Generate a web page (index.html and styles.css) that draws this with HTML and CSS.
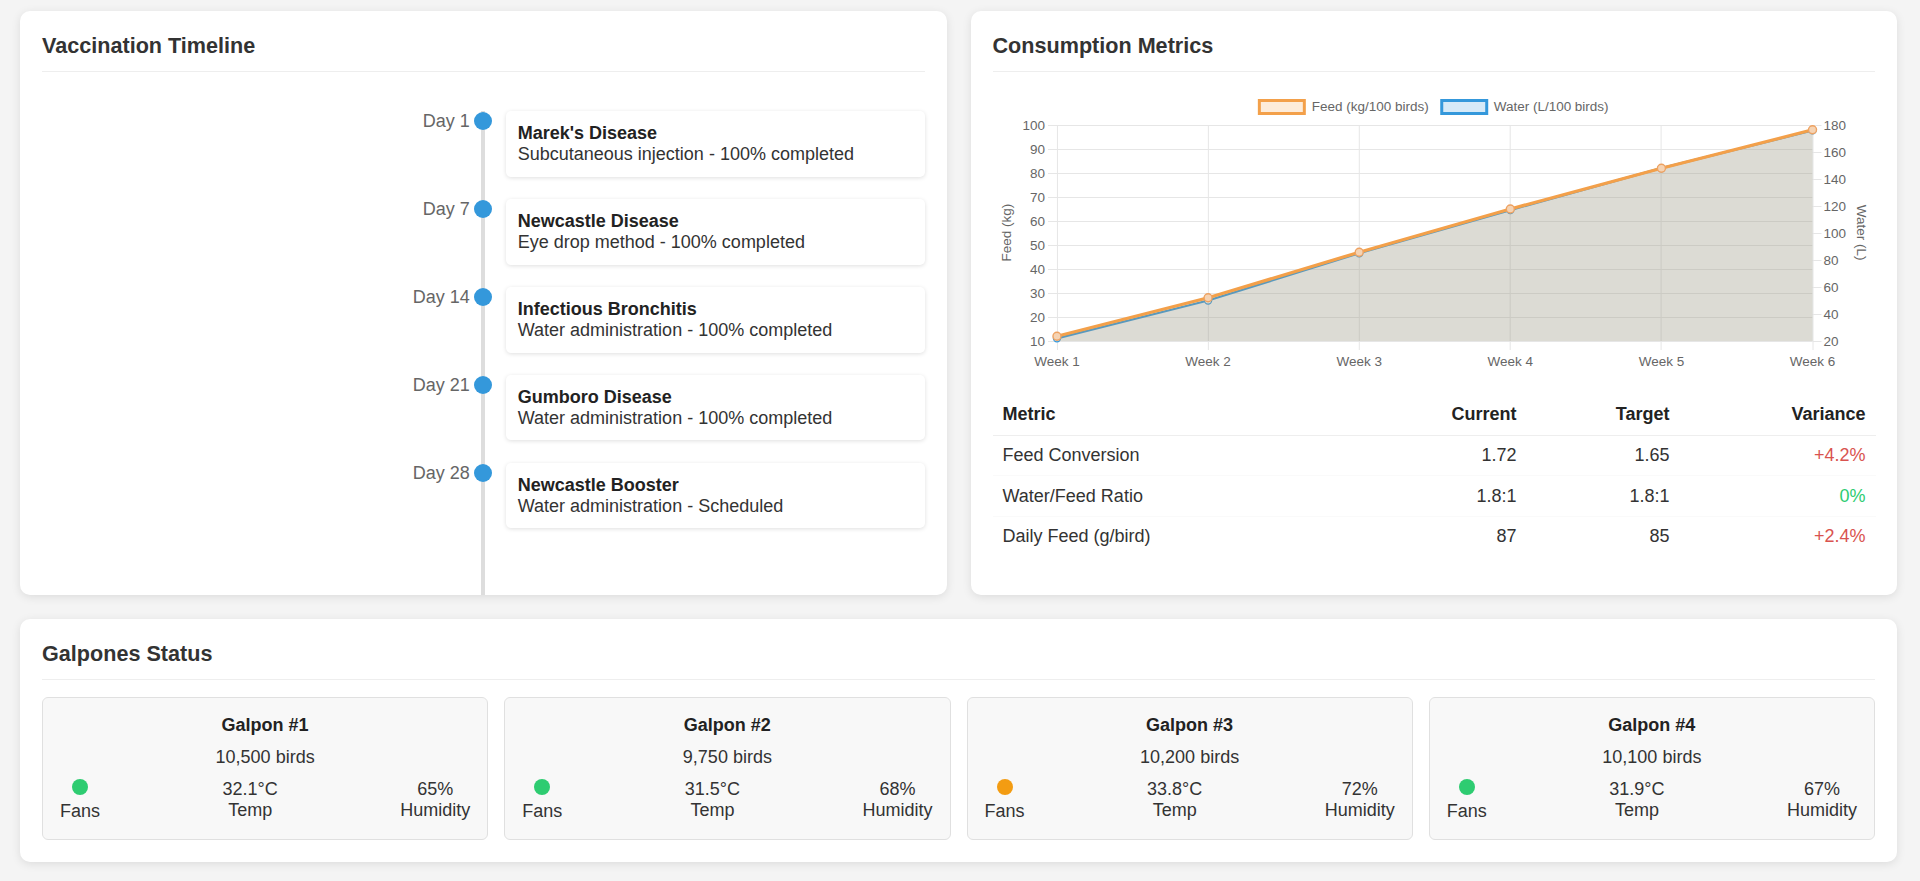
FILE: index.html
```html
<!DOCTYPE html>
<html lang="en">
<head>
<meta charset="utf-8">
<title>Farm Dashboard</title>
<link rel="stylesheet" href="styles.css">
</head>
<body>
<div class="dashboard">
  <div class="top-row">
    <section class="card">
      <div class="card-header"><h2>Vaccination Timeline</h2></div>
      <div class="timeline">
        <div class="tl-item">
          <div class="tl-day">Day 1</div>
          <span class="tl-dot"></span>
          <div class="tl-content">
            <div class="tl-card">
              <div class="tl-title">Marek's Disease</div>
              <div class="tl-desc">Subcutaneous injection - 100% completed</div>
            </div>
          </div>
        </div>
        <div class="tl-item">
          <div class="tl-day">Day 7</div>
          <span class="tl-dot"></span>
          <div class="tl-content">
            <div class="tl-card">
              <div class="tl-title">Newcastle Disease</div>
              <div class="tl-desc">Eye drop method - 100% completed</div>
            </div>
          </div>
        </div>
        <div class="tl-item">
          <div class="tl-day">Day 14</div>
          <span class="tl-dot"></span>
          <div class="tl-content">
            <div class="tl-card">
              <div class="tl-title">Infectious Bronchitis</div>
              <div class="tl-desc">Water administration - 100% completed</div>
            </div>
          </div>
        </div>
        <div class="tl-item">
          <div class="tl-day">Day 21</div>
          <span class="tl-dot"></span>
          <div class="tl-content">
            <div class="tl-card">
              <div class="tl-title">Gumboro Disease</div>
              <div class="tl-desc">Water administration - 100% completed</div>
            </div>
          </div>
        </div>
        <div class="tl-item">
          <div class="tl-day">Day 28</div>
          <span class="tl-dot"></span>
          <div class="tl-content">
            <div class="tl-card">
              <div class="tl-title">Newcastle Booster</div>
              <div class="tl-desc">Water administration - Scheduled</div>
            </div>
          </div>
        </div>
      </div>
    </section>

    <section class="card">
      <div class="card-header"><h2>Consumption Metrics</h2></div>
      <svg class="chart" viewBox="0 0 883 306" preserveAspectRatio="none">
        <g transform="translate(0,3)">
          <!-- legend -->
          <rect x="266.5" y="8.5" width="45" height="13" fill="rgba(245,160,72,0.2)" stroke="#f3a04a" stroke-width="3"/>
          <text class="lbl" x="319" y="19">Feed (kg/100 birds)</text>
          <rect x="449" y="8.5" width="45" height="13" fill="rgba(52,152,219,0.2)" stroke="#3498db" stroke-width="3"/>
          <text class="lbl" x="501" y="19">Water (L/100 birds)</text>

          <!-- horizontal grid (left axis) -->
          <g stroke="#e6e6e6" stroke-width="1">
            <line x1="55" y1="33.5" x2="820" y2="33.5"/>
            <line x1="55" y1="57.5" x2="820" y2="57.5"/>
            <line x1="55" y1="81.5" x2="820" y2="81.5"/>
            <line x1="55" y1="105.5" x2="820" y2="105.5"/>
            <line x1="55" y1="129.5" x2="820" y2="129.5"/>
            <line x1="55" y1="153.5" x2="820" y2="153.5"/>
            <line x1="55" y1="177.5" x2="820" y2="177.5"/>
            <line x1="55" y1="201.5" x2="820" y2="201.5"/>
            <line x1="55" y1="225.5" x2="820" y2="225.5"/>
            <line x1="55" y1="249.5" x2="820" y2="249.5"/>
            <!-- vertical grid -->
            <line x1="64.5" y1="33" x2="64.5" y2="258"/>
            <line x1="215.5" y1="33" x2="215.5" y2="258"/>
            <line x1="366.5" y1="33" x2="366.5" y2="258"/>
            <line x1="517.5" y1="33" x2="517.5" y2="258"/>
            <line x1="668.5" y1="33" x2="668.5" y2="258"/>
            <line x1="820.5" y1="33" x2="820.5" y2="258"/>
            <!-- right axis ticks -->
            <line x1="820" y1="33.5" x2="829" y2="33.5"/>
            <line x1="820" y1="60.5" x2="829" y2="60.5"/>
            <line x1="820" y1="87.5" x2="829" y2="87.5"/>
            <line x1="820" y1="114.5" x2="829" y2="114.5"/>
            <line x1="820" y1="141.5" x2="829" y2="141.5"/>
            <line x1="820" y1="168.5" x2="829" y2="168.5"/>
            <line x1="820" y1="195.5" x2="829" y2="195.5"/>
            <line x1="820" y1="222.5" x2="829" y2="222.5"/>
            <line x1="820" y1="249.5" x2="829" y2="249.5"/>
          </g>

          <!-- left tick labels -->
          <g class="lbl" text-anchor="end">
            <text x="52" y="37.8">100</text>
            <text x="52" y="61.8">90</text>
            <text x="52" y="85.8">80</text>
            <text x="52" y="109.8">70</text>
            <text x="52" y="133.8">60</text>
            <text x="52" y="157.8">50</text>
            <text x="52" y="181.8">40</text>
            <text x="52" y="205.8">30</text>
            <text x="52" y="229.8">20</text>
            <text x="52" y="253.8">10</text>
          </g>
          <!-- right tick labels -->
          <g class="lbl" text-anchor="start">
            <text x="831" y="37.8">180</text>
            <text x="831" y="64.8">160</text>
            <text x="831" y="91.8">140</text>
            <text x="831" y="118.8">120</text>
            <text x="831" y="145.8">100</text>
            <text x="831" y="172.8">80</text>
            <text x="831" y="199.8">60</text>
            <text x="831" y="226.8">40</text>
            <text x="831" y="253.8">20</text>
          </g>
          <!-- x labels -->
          <g class="lbl" text-anchor="middle">
            <text x="64" y="273.8">Week 1</text>
            <text x="215.2" y="273.8">Week 2</text>
            <text x="366.4" y="273.8">Week 3</text>
            <text x="517.6" y="273.8">Week 4</text>
            <text x="668.8" y="273.8">Week 5</text>
            <text x="820" y="273.8">Week 6</text>
          </g>
          <!-- axis titles -->
          <text class="lbl" text-anchor="middle" transform="translate(12.7,140.7) rotate(-90)" y="4.8">Feed (kg)</text>
          <text class="lbl" text-anchor="middle" transform="translate(869,140.7) rotate(90)" y="4.8">Water (L)</text>

          <!-- water dataset -->
          <polygon fill="rgba(52,152,219,0.2)" points="64,246.3 215.2,208.5 366.4,161.25 517.6,118.05 668.8,76.2 820,38.4 820,249 64,249"/>
          <polyline fill="none" stroke="#3498db" stroke-width="2.25" stroke-linejoin="round" points="64,246.3 215.2,208.5 366.4,161.25 517.6,118.05 668.8,76.2 820,38.4"/>
          <g fill="rgba(214,234,248,1)" stroke="#3498db" stroke-width="1.2">
            <circle cx="64" cy="246.3" r="3.6"/>
            <circle cx="215.2" cy="208.5" r="3.6"/>
            <circle cx="366.4" cy="161.25" r="3.6"/>
            <circle cx="517.6" cy="118.05" r="3.6"/>
            <circle cx="668.8" cy="76.2" r="3.6"/>
            <circle cx="820" cy="38.4" r="3.6"/>
          </g>

          <!-- feed dataset -->
          <polygon fill="rgba(245,160,72,0.2)" points="64,244.2 215.2,205.8 366.4,160.2 517.6,117 668.8,76.2 820,37.8 820,249 64,249"/>
          <polyline fill="none" stroke="#f3a04a" stroke-width="3.2" stroke-linejoin="round" points="64,244.2 215.2,205.8 366.4,160.2 517.6,117 668.8,76.2 820,37.8"/>
          <g fill="#f5d3b3" stroke="#eea262" stroke-width="1.4">
            <circle cx="64" cy="244.2" r="4"/>
            <circle cx="215.2" cy="205.8" r="4"/>
            <circle cx="366.4" cy="160.2" r="4"/>
            <circle cx="517.6" cy="117" r="4"/>
            <circle cx="668.8" cy="76.2" r="4"/>
            <circle cx="820" cy="37.8" r="4"/>
          </g>
        </g>
      </svg>

      <table class="metrics">
        <colgroup>
          <col class="c-metric"><col class="c-current"><col class="c-target"><col class="c-var">
        </colgroup>
        <thead>
          <tr><th>Metric</th><th>Current</th><th>Target</th><th>Variance</th></tr>
        </thead>
        <tbody>
          <tr><td>Feed Conversion</td><td>1.72</td><td>1.65</td><td class="neg">+4.2%</td></tr>
          <tr><td>Water/Feed Ratio</td><td>1.8:1</td><td>1.8:1</td><td class="pos">0%</td></tr>
          <tr><td>Daily Feed (g/bird)</td><td>87</td><td>85</td><td class="neg">+2.4%</td></tr>
        </tbody>
      </table>
    </section>
  </div>

  <section class="card">
    <div class="card-header"><h2>Galpones Status</h2></div>
    <div class="galpon-grid">
      <div class="galpon">
        <div class="galpon-name">Galpon #1</div>
        <div class="galpon-birds">10,500 birds</div>
        <div class="galpon-metrics">
          <div class="gm"><span class="fan-dot ok"></span><div>Fans</div></div>
          <div class="gm"><div>32.1°C</div><div>Temp</div></div>
          <div class="gm"><div>65%</div><div>Humidity</div></div>
        </div>
      </div>
      <div class="galpon">
        <div class="galpon-name">Galpon #2</div>
        <div class="galpon-birds">9,750 birds</div>
        <div class="galpon-metrics">
          <div class="gm"><span class="fan-dot ok"></span><div>Fans</div></div>
          <div class="gm"><div>31.5°C</div><div>Temp</div></div>
          <div class="gm"><div>68%</div><div>Humidity</div></div>
        </div>
      </div>
      <div class="galpon">
        <div class="galpon-name">Galpon #3</div>
        <div class="galpon-birds">10,200 birds</div>
        <div class="galpon-metrics">
          <div class="gm"><span class="fan-dot warn"></span><div>Fans</div></div>
          <div class="gm"><div>33.8°C</div><div>Temp</div></div>
          <div class="gm"><div>72%</div><div>Humidity</div></div>
        </div>
      </div>
      <div class="galpon">
        <div class="galpon-name">Galpon #4</div>
        <div class="galpon-birds">10,100 birds</div>
        <div class="galpon-metrics">
          <div class="gm"><span class="fan-dot ok"></span><div>Fans</div></div>
          <div class="gm"><div>31.9°C</div><div>Temp</div></div>
          <div class="gm"><div>67%</div><div>Humidity</div></div>
        </div>
      </div>
    </div>
  </section>
</div>
</body>
</html>
```

FILE: styles.css
```css
* { box-sizing: border-box; }

html, body {
  margin: 0;
  padding: 0;
}

body {
  background: #f4f4f4;
  font-family: "Liberation Sans", Arial, sans-serif;
  font-size: 18px;
  line-height: 20.7px;
  color: #333;
}

.dashboard {
  padding: 11px 23px 19px 20px;
  display: flex;
  flex-direction: column;
  gap: 24px;
}

.top-row {
  display: grid;
  grid-template-columns: 1fr 1fr;
  gap: 24px;
}

.card {
  position: relative;
  background: #fff;
  border-radius: 10px;
  box-shadow: 0 2px 10px rgba(0, 0, 0, 0.1);
  padding: 23px 22px 22px;
  display: flex;
  flex-direction: column;
  overflow: hidden;
  min-width: 0;
}

.card-header {
  padding-bottom: 12px;
  border-bottom: 1px solid #eee;
  margin-bottom: 17px;
}

.card-header h2 {
  margin: 0;
  font-size: 21.6px;
  line-height: 24.8px;
  font-weight: bold;
  color: #333;
}

/* Timeline */
.timeline {
  position: relative;
  flex: 1;
  padding: 22.5px 0 22.2px;
}

.timeline::before {
  content: "";
  position: absolute;
  left: calc(50% - 2px);
  width: 4px;
  top: 22.5px;
  bottom: -22px;
  background: #ddd;
}

.tl-item {
  position: relative;
  display: grid;
  grid-template-columns: 1fr 1fr;
  margin-bottom: 22.5px;
}

.tl-day {
  text-align: right;
  padding-right: 13.5px;
  color: #666;
}

.tl-dot {
  position: absolute;
  left: calc(50% - 9px);
  top: 0.7px;
  width: 18px;
  height: 18px;
  border-radius: 50%;
  background: #3498db;
}

.tl-content {
  padding-left: 22.5px;
}

.tl-card {
  background: #fff;
  border-radius: 5px;
  box-shadow: 0 1px 4px rgba(0, 0, 0, 0.13);
  padding: 12px;
}

.tl-title {
  font-weight: bold;
  color: #222;
}

.tl-desc {
  color: #333;
}

/* Chart */
.chart {
  display: block;
  width: 100%;
  height: 306px;
}

.chart .lbl,
.chart text {
  font-family: "Liberation Sans", Arial, sans-serif;
  font-size: 13.5px;
  fill: #666;
}

/* Metrics table */
.metrics {
  width: 100%;
  border-collapse: collapse;
  table-layout: fixed;
}

.c-metric { width: 380px; }
.c-current { width: 154px; }
.c-target { width: 153px; }
.c-var { width: 196px; }

.metrics th,
.metrics td {
  padding: 9.5px 10px;
  line-height: 20.7px;
  text-align: right;
  font-size: 18px;
}

.metrics th:first-child,
.metrics td:first-child {
  text-align: left;
}

.metrics th {
  font-weight: bold;
  color: #222;
  border-bottom: 1px solid #eee;
}

.metrics td {
  border-bottom: 1px solid #fafafa;
  color: #333;
}

.metrics tbody tr:last-child td {
  border-bottom: 1px solid transparent;
}

.metrics .neg { color: #d9534f; }
.metrics .pos { color: #2ecc71; }

/* Galpones */
.galpon-grid {
  display: grid;
  grid-template-columns: repeat(4, 1fr);
  gap: 16px;
}

.galpon {
  background: #f8f8f8;
  border: 1px solid #e0e0e0;
  border-radius: 6px;
  padding: 17px;
  text-align: center;
}

.galpon-name {
  font-weight: bold;
  color: #222;
  margin-bottom: 11.3px;
}

.galpon-birds {
  margin-bottom: 11.3px;
}

.galpon-metrics {
  display: flex;
  justify-content: space-between;
  align-items: flex-start;
}

.gm {
  text-align: center;
}

.fan-dot {
  display: block;
  width: 16px;
  height: 16px;
  border-radius: 50%;
  margin: 0 auto 6px;
}

.fan-dot.ok { background: #2ecc71; }
.fan-dot.warn { background: #f39c12; }
```
